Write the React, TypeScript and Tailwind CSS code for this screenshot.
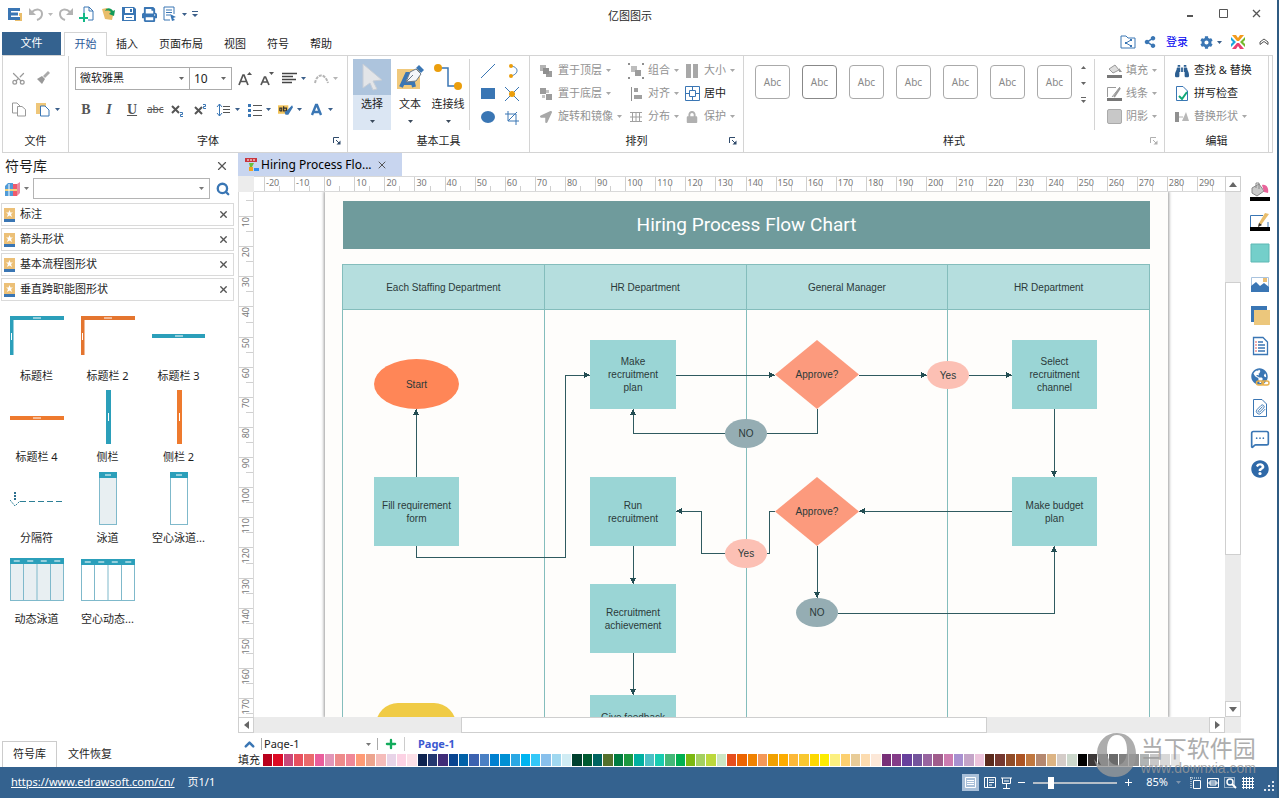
import type { ReactNode } from "react"
import { FaBinoculars, FaCog, FaGlobeAmericas, FaLocationArrow, FaLock, FaPrint, FaQuestionCircle, FaShareAlt } from "react-icons/fa"
import { ChevronUp, MessageSquareMore, Paperclip, Plus, Scissors, Search, X } from "lucide-react"

/* ---------- data ---------- */

const swatches = [
  "#b8001c", "#dd0a24", "#c8487a", "#e8505e", "#ea6a6c", "#ea5e9c", "#e296b8", "#ee8b8b", "#f08898", "#ff9b76", "#eca48e", "#f5bcba", "#e8d4e8", "#fcd2e4", "#fce0e8",
  "#0d2350", "#243870", "#402c78", "#084490", "#0061a8", "#3c62b0", "#4a80c4", "#0080d0", "#0090d4", "#2aa8e4", "#00b4f0", "#34c8f8", "#88c0ec", "#a0d8f0", "#d0ecf4",
  "#00402e", "#005a30", "#006460", "#54702c", "#007c40", "#1c9840", "#00b0a0", "#4cc0c4", "#18ccb0", "#44b878", "#00b050", "#7cb810", "#a4d060", "#bcd83c", "#cce6c4",
  "#e64e1e", "#ec6400", "#f08200", "#f49858", "#f0a000", "#fcac00", "#fcb838", "#f8c830", "#fcd800", "#fcec00", "#fcf080", "#fcd070", "#e8cc98", "#fcdcb0", "#fce8d8",
  "#783078", "#843c88", "#68409c", "#74549c", "#9864a0", "#a05c8c", "#cc7cb0", "#a890d0", "#c4a4c8", "#ecc4dc",
  "#5a2a1c", "#743830", "#904c28", "#ac5424", "#c07840", "#b48870", "#dcb484", "#d4ccc8", "#ccd8cc",
  "#000000", "#3c3838", "#585858", "#6a6a6a", "#808080", "#909090", "#b0b4b4", "#c8c8c8", "#d8d8d8", "#e4e4e4",
]

const menus = ["插入", "页面布局", "视图", "符号", "帮助"]
const libraries = ["标注", "箭头形状", "基本流程图形状", "垂直跨职能图形状"]
const lanes = ["Each Staffing Department", "HR Department", "General Manager", "HR Department"]

interface FlowNode {
  kind: "rect" | "oval" | "diamond"
  x: number
  y: number
  w: number
  h: number
  color: string
  lines: string[]
}

const nodes: FlowNode[] = [
  { kind: "oval", x: 49, y: 167, w: 85, h: 50, color: "#ff8657", lines: ["Start"] },
  { kind: "rect", x: 49, y: 285, w: 85, h: 69, color: "#9ad5d5", lines: ["Fill requirement", "form"] },
  { kind: "rect", x: 265, y: 148, w: 86, h: 69, color: "#9ad5d5", lines: ["Make", "recruitment", "plan"] },
  { kind: "rect", x: 265, y: 285, w: 86, h: 69, color: "#9ad5d5", lines: ["Run", "recruitment"] },
  { kind: "rect", x: 265, y: 392, w: 86, h: 69, color: "#9ad5d5", lines: ["Recruitment", "achievement"] },
  { kind: "rect", x: 265, y: 503, w: 86, h: 44, color: "#9ad5d5", lines: ["Give feedback"] },
  { kind: "diamond", x: 450, y: 148, w: 84, h: 69, color: "#fc9a7d", lines: ["Approve?"] },
  { kind: "diamond", x: 450, y: 285, w: 84, h: 69, color: "#fc9a7d", lines: ["Approve?"] },
  { kind: "oval", x: 400, y: 227, w: 42, h: 29, color: "#95adb3", lines: ["NO"] },
  { kind: "oval", x: 471, y: 406, w: 42, h: 29, color: "#95adb3", lines: ["NO"] },
  { kind: "oval", x: 602, y: 169, w: 42, h: 28, color: "#fcc0b4", lines: ["Yes"] },
  { kind: "oval", x: 400, y: 347, w: 42, h: 29, color: "#fcc0b4", lines: ["Yes"] },
  { kind: "rect", x: 687, y: 148, w: 85, h: 69, color: "#9ad5d5", lines: ["Select", "recruitment", "channel"] },
  { kind: "rect", x: 687, y: 285, w: 85, h: 69, color: "#9ad5d5", lines: ["Make budget", "plan"] },
  { kind: "oval", x: 51, y: 511, w: 80, h: 44, color: "#f0cb45", lines: [] },
]

const arrows = [
  "M91 285V217", "M91 354V365H240V183H265", "M351 183H450", "M534 183H602", "M644 183H687",
  "M400 241H308V217", "M729 217V285", "M687 319H534", "M400 361H376V319H351",
  "M492 354V406", "M513 421H729V354", "M308 354V392", "M308 461V503",
]
const plainLines = ["M492 217V241H442", "M450 319H444V361H442"]

/* ---------- small pieces ---------- */

function Svg({ w = 16, h = 16, box, children }: { w?: number; h?: number; box?: string; children: ReactNode }) {
  return (
    <svg width={w} height={h} viewBox={box ?? `0 0 ${w} ${h}`} fill="none" aria-hidden="true" className="shrink-0">
      {children}
    </svg>
  )
}

function Caret({ color = "#3b4a5c" }: { color?: string }) {
  return (
    <Svg w={5} h={3}>
      <path d="M0 0H5L2.500 3Z" fill={color} />
    </Svg>
  )
}

function Launcher({ color = "#2f4a6b" }: { color?: string }) {
  return (
    <Svg w={8} h={8}>
      <path d="M.5 6V.5H6M3 3L6 6" stroke={color} />
      <path d="M7.500 3.500V7.500H3.500Z" fill={color} />
    </Svg>
  )
}

function Group({ label, className, launcher, children }: { label: string; className: string; launcher?: ReactNode; children: ReactNode }) {
  return (
    <section className={`flex flex-col border-r border-[#d4d4d4] ${className}`}>
      <div className="flex flex-1 min-h-0">{children}</div>
      <div className="grid h-[22px] grid-cols-[1fr_auto_1fr] items-center">
        <span />
        <h2>{label}</h2>
        {launcher && <button aria-label={`${label}设置`} className="justify-self-end pr-1.5">{launcher}</button>}
      </div>
    </section>
  )
}

function IconButton({ label, caret, children }: { label: string; caret?: string; children: ReactNode }) {
  return (
    <button aria-label={label} title={label} className="flex items-center gap-1">
      {children}
      {caret && <Caret color={caret} />}
    </button>
  )
}

function Tool({ label, icon, dim, caret }: { label: string; icon: ReactNode; dim?: boolean; caret?: boolean }) {
  return (
    <button className={`flex h-[23px] items-center gap-1 whitespace-nowrap ${dim ? "text-[#929292]" : "text-[#222]"}`}>
      <span className="flex w-4 justify-center">{icon}</span>
      {label}
      {caret && <Caret color="#a8a8a8" />}
    </button>
  )
}

/* ---------- title bar and menu ---------- */

function TitleBar() {
  return (
    <header className="grid h-8 grid-cols-[1fr_auto_1fr] items-center pr-4 pl-[7px]">
      <div className="flex items-center gap-[5px] pb-1">
        <Svg>
          <path d="M1 2H13V5H4V6.500H11V9.500H4V11H13V14H1Z" fill="#3a76b4" />
          <path d="M12 7H15V15H8V14H13V10H12Z" fill="#e9bd6b" />
        </Svg>
        <IconButton label="撤销" caret="#b9b9b9">
          <Svg>
            <path d="M4 6C8 2 14 3 14 8C14 11 12 13 9 14" stroke="#b3b3b3" strokeWidth="2" />
            <path d="M1 2V9H8Z" fill="#b3b3b3" />
          </Svg>
        </IconButton>
        <IconButton label="重做">
          <Svg>
            <path d="M12 6C8 2 2 3 2 8C2 11 4 13 7 14" stroke="#b3b3b3" strokeWidth="2" />
            <path d="M15 2V9H8Z" fill="#b3b3b3" />
          </Svg>
        </IconButton>
        <IconButton label="新建">
          <Svg>
            <path d="M5 8V1H10L14 5V14H9M10 1V5H14" stroke="#3a76b4" />
            <path d="M5 7V16M0 12H9" stroke="#12b886" strokeWidth="2" />
          </Svg>
        </IconButton>
        <IconButton label="打开">
          <Svg>
            <path d="M2 3L7 2L9 4L14 5L12 14L5 13Z" fill="#e9bd6b" />
            <path d="M5 5C7 1 11 2 13 5L15 4L14 10L9 8L11 6C10 5 8 4 5 5Z" fill="#139a58" />
          </Svg>
        </IconButton>
        <IconButton label="保存">
          <Svg>
            <path d="M1 1H13L15 3V15H1Z" fill="#3a76b4" />
            <path d="M4 2H12V7H4ZM3 9H13V14H3Z" fill="#fff" />
            <path d="M9 3H11V6H9ZM5 11H11V12H5Z" fill="#3a76b4" />
          </Svg>
        </IconButton>
        <IconButton label="打印">
          <FaPrint size={15} color="#3a76b4" />
        </IconButton>
        <IconButton label="打印预览" caret="#3b5f8a">
          <Svg>
            <path d="M8 14H2V1H12V8M4 4H10M4 6.500H10M4 9H8" stroke="#3a76b4" />
            <path d="M8 8L14 11L11 12L13 14L10 15Z" fill="#3a76b4" />
          </Svg>
        </IconButton>
        <IconButton label="自定义">
          <Svg w={6} h={7}>
            <path d="M0 .5H6" stroke="#3b5f8a" />
            <path d="M0 3H6L3 6Z" fill="#3b5f8a" />
          </Svg>
        </IconButton>
      </div>
      <h1 className="pr-2">亿图图示</h1>
      <div className="flex items-center gap-6 justify-self-end pb-1.5">
        <IconButton label="最小化">
          <Svg w={9} h={9}><path d="M1 7H7" stroke="#555" strokeWidth="2" /></Svg>
        </IconButton>
        <IconButton label="最大化">
          <Svg w={9} h={9}><path d="M.5 .5H8.500V8.500H.5Z" stroke="#555" /></Svg>
        </IconButton>
        <IconButton label="关闭">
          <Svg w={9} h={9}><path d="M1 1L8 8M8 1L1 8" stroke="#555" strokeWidth="1.300" /></Svg>
        </IconButton>
      </div>
    </header>
  )
}

function MenuBar() {
  return (
    <nav className="relative z-10 -mb-px flex h-6 items-stretch px-[2px]">
      <button className="mb-px w-[59px] bg-[#34628f] text-white">文件</button>
      <button className="ml-[3px] w-[43px] border border-b-0 border-[#d4d4d4] bg-white text-[#2c5a9a]">开始</button>
      <div className="flex gap-[21px] pl-[9px]">
        {menus.map((m) => (
          <button key={m}>{m}</button>
        ))}
      </div>
      <div className="ml-auto flex items-center gap-2 pr-1.5 pb-1">
        <IconButton label="共享文件夹">
          <Svg>
            <path d="M1 14V2H6L8 4H15V14Z" stroke="#3a76b4" />
            <path d="M11 6L6 9L11 12" stroke="#3a76b4" />
            <path d="M10 5H12V7H10ZM5 8H7V10H5ZM10 11H12V13H10Z" fill="#3a76b4" />
          </Svg>
        </IconButton>
        <IconButton label="分享"><FaShareAlt size={12} color="#3a76b4" /></IconButton>
        <a href="#login" className="pr-1 pl-[2px] text-[#0000f0]">登录</a>
        <IconButton label="选项" caret="#3b5f8a"><FaCog size={13} color="#3a76b4" /></IconButton>
        <IconButton label="应用">
          <Svg>
            <path d="M2 1H6L8 4L10 1H14L9 7H7Z" fill="#f39b1c" />
            <path d="M1 3L6 8L1 13V10L3 8L1 6Z" fill="#1ba7dc" />
            <path d="M15 3L10 8L15 13V10L13 8L15 6Z" fill="#74b92c" />
            <path d="M7 9H9L14 15H10L8 12L6 15H2Z" fill="#ea4070" />
          </Svg>
        </IconButton>
        <span className="-ml-1 w-px" />
        <IconButton label="折叠功能区">
          <Svg w={10} h={8}><path d="M1 4L5 1L9 4V6.500L5 3.500L1 6.500Z" stroke="#555" /></Svg>
        </IconButton>
      </div>
    </nav>
  )
}

/* ---------- ribbon ---------- */

function LayerIcon({ back }: { back?: boolean }) {
  return (
    <Svg w={14} h={14}>
      <path d="M1 1H7V7H1Z" fill={back ? "#9c9c9c" : "#b4b4b4"} />
      <path d="M7 7H13V13H7Z" fill="#9c9c9c" />
      <path d={back ? "M7 3H10V6H7ZM3 8H6V11H3Z" : "M4 4H10V10H4Z"} fill={back ? "#c4c4c4" : "#8f8f8f"} />
    </Svg>
  )
}

function FontGroup() {
  return (
    <Group label="字体" className="w-[279px]" launcher={<Launcher />}>
      <div className="flex flex-col pt-[11px] pl-1.5">
        <div className="flex h-[23px] items-center">
          <div className="relative flex items-center">
            <select aria-label="字体" className="h-[23px] w-[115px] appearance-none border border-[#ababab] bg-white pl-1">
              <option>微软雅黑</option>
            </select>
            <span className="pointer-events-none absolute right-1.5"><Caret color="#666" /></span>
          </div>
          <div className="relative -ml-px flex items-center">
            <select aria-label="字号" className="h-[23px] w-[43px] appearance-none border border-[#ababab] bg-white pl-1 text-xs">
              <option>10</option>
            </select>
            <span className="pointer-events-none absolute right-1.5"><Caret color="#666" /></span>
          </div>
          <div className="flex items-center gap-2 pl-1.5">
            <IconButton label="增大字号">
              <Svg w={14}><path d="M1 14L5 4H6L10 14M2.500 10.500H8.500" stroke="#555" strokeWidth="1.700" /><path d="M9 4L11.500 1L14 4Z" fill="#555" /></Svg>
            </IconButton>
            <IconButton label="减小字号">
              <Svg w={14}><path d="M1 14L4.500 6H5.500L9 14M2.500 11H7.500" stroke="#555" strokeWidth="1.700" /><path d="M9 1H14L11.500 4Z" fill="#555" /></Svg>
            </IconButton>
            <IconButton label="对齐" caret="#3b5f8a">
              <Svg w={15} h={13}><path d="M0 1.500H15M0 4.500H11M0 7.500H14M0 10.500H10" stroke="#444" strokeWidth="1.500" /></Svg>
            </IconButton>
            <IconButton label="文字弧度" caret="#b5b5b5">
              <Svg w={15} h={13}><path d="M1 11C3 1 11 1 14 11" stroke="#b5b5b5" strokeWidth="2" strokeDasharray="3 1" /></Svg>
            </IconButton>
          </div>
        </div>
        <div className="mt-[8px] flex h-[23px] items-center gap-[7px] pl-[3px] text-[#555]">
          <button className="w-4 font-['Liberation_Serif',serif] text-sm font-bold">B</button>
          <button className="w-4 font-['Liberation_Serif',serif] text-sm font-bold italic">I</button>
          <button className="w-4 font-['Liberation_Serif',serif] text-sm font-bold underline">U</button>
          <button className="w-4 text-[10px] line-through">abc</button>
          <IconButton label="下标">
            <Svg><path d="M2 4L9 11M9 4L2 11" stroke="#555" strokeWidth="2" /><path d="M10 10.500H12.500V12.500H10.500V14.500H13" stroke="#3a76b4" /></Svg>
          </IconButton>
          <IconButton label="上标">
            <Svg><path d="M2 5L9 12M9 5L2 12" stroke="#555" strokeWidth="2" /><path d="M10 2.500H12.500V4.500H10.500V6.500H13" stroke="#3a76b4" /></Svg>
          </IconButton>
          <IconButton label="行距" caret="#3b5f8a">
            <Svg w={15}><path d="M3.500 2V14M1 5L3.500 2L6 5M1 11L3.500 14L6 11" stroke="#3a76b4" /><path d="M7 4.500H14M7 7.500H14M7 10.500H14" stroke="#555" /></Svg>
          </IconButton>
          <IconButton label="项目符号" caret="#3b5f8a">
            <Svg w={15}><path d="M1 2H4V5H1ZM1 7H4V10H1ZM1 12H4V15H1Z" fill="#3a76b4" /><path d="M6 3.500H15M6 8.500H15M6 13.500H15" stroke="#555" /></Svg>
          </IconButton>
          <IconButton label="突出显示" caret="#3b5f8a">
            <Svg w={15} box="0 0 16 16">
              <path d="M0 3H11V12H0Z" fill="#f3c45a" />
              <path d="M2 9V6H4V9H2M6 4V9H9V6H6" stroke="#333" strokeWidth="1.300" />
              <path d="M15 3L16 5L11 13H8L7 10L9 9Z" fill="#3a76b4" />
            </Svg>
          </IconButton>
          <IconButton label="字体颜色" caret="#3b5f8a">
            <Svg w={15}><path d="M3 13L7 3H8L12 13M5 10H10" stroke="#3a76b4" strokeWidth="2.400" /></Svg>
          </IconButton>
        </div>
      </div>
    </Group>
  )
}

function BigTool({ label, icon, active }: { label: string; icon: ReactNode; active?: boolean }) {
  return (
    <button aria-pressed={active} className={`flex h-[71px] w-[38px] flex-col items-center whitespace-nowrap ${active ? "bg-[#dbe6f3]" : ""}`}>
      <span className={`flex h-9 w-full items-center justify-center ${active ? "bg-[#adc4dd]" : ""}`}>{icon}</span>
      <span className="h-[25px] leading-[18px]">{label}</span>
      <Caret />
    </button>
  )
}

function BasicTools() {
  return (
    <Group label="基本工具" className="w-[182px]">
      <div className="flex pt-[3px] pl-[5px]">
        <BigTool
          active
          label="选择"
          icon={<Svg w={24} h={28}><path d="M3 1L22 17L13 18L17 26L13 27L10 20L3 25Z" fill="#e3e5e8" stroke="#c6cdd6" /></Svg>}
        />
        <BigTool
          label="文本"
          icon={
            <Svg w={28} h={26}>
              <path d="M1 5H24V25H1Z" fill="#f0c97c" />
              <path d="M5 23L11 10H15L18 23M8 19H16" stroke="#3a76b4" strokeWidth="4" />
              <path d="M10 18L14 8L20 5L25 10L20 17Z" fill="#f4f6f8" stroke="#6c7a89" />
              <path d="M10 18L17 11" stroke="#6c7a89" />
              <path d="M20 4L23 1L28 6L25 9Z" fill="#3a76b4" />
            </Svg>
          }
        />
        <BigTool
          label="连接线"
          icon={
            <Svg w={28} h={28}>
              <path d="M4 5H14V23H24" stroke="#3a76b4" strokeWidth="1.500" />
              <circle cx="4" cy="5" r="4" fill="#eb9e0c" />
              <circle cx="24" cy="23" r="4" fill="#eb9e0c" />
            </Svg>
          }
        />
      </div>
      <div className="mt-[3px] ml-[2px] grid h-[71px] grid-cols-2 place-items-center gap-x-2 border-l border-[#d4d4d4] pl-[10px]">
        <IconButton label="直线"><Svg><path d="M1 15L15 1" stroke="#3a76b4" /></Svg></IconButton>
        <IconButton label="弧线">
          <Svg><path d="M7 3C15 4 15 11 7 13" stroke="#3a76b4" /><circle cx="7" cy="3" r="2" fill="#eb9e0c" /><circle cx="7" cy="13" r="2" fill="#eb9e0c" /></Svg>
        </IconButton>
        <IconButton label="矩形"><Svg><path d="M1 2H15V13H1Z" fill="#3a76b4" /></Svg></IconButton>
        <IconButton label="连接点"><Svg><path d="M1 1L15 15M15 1L1 15" stroke="#3a76b4" /><circle cx="8" cy="8" r="3" fill="#eb9e0c" /></Svg></IconButton>
        <IconButton label="椭圆"><Svg><ellipse cx="8" cy="7" rx="7" ry="6" fill="#3a76b4" /></Svg></IconButton>
        <IconButton label="裁剪"><Svg><path d="M4 1V11H15M1 4H12V15M4 11L13 2" stroke="#3a76b4" /></Svg></IconButton>
      </div>
    </Group>
  )
}

function ArrangeGroup() {
  return (
    <Group label="排列" className="w-[214px]" launcher={<Launcher />}>
      <div className="flex pt-[3px] pl-2">
        <div className="w-[90px]">
          <Tool dim caret label="置于顶层" icon={<LayerIcon />} />
          <Tool dim caret label="置于底层" icon={<LayerIcon back />} />
          <Tool dim caret label="旋转和镜像" icon={<FaLocationArrow size={12} color="#a8a8a8" />} />
        </div>
        <div className="w-[56px]">
          <Tool dim caret label="组合" icon={
            <Svg><path d="M3 3H9V9H3Z" fill="#bdbdbd" /><path d="M7 7H13V13H7Z" fill="#9c9c9c" /><path d="M0 0H2V2H0ZM14 0H16V2H14ZM0 14H2V16H0ZM14 14H16V16H14Z" fill="#8f8f8f" /></Svg>
          } />
          <Tool dim caret label="对齐" icon={<Svg w={14}><path d="M2.500 1V15" stroke="#8f8f8f" /><path d="M5 2H9V6H5ZM5 9H13V13H5Z" fill="#a0a0a0" /></Svg>} />
          <Tool dim caret label="分布" icon={<Svg w={14} h={12}><path d="M1 1.500H13M1 10.500H13M3.500 1V11M10.500 1V11M7 1V11M1 6H13" stroke="#a0a0a0" /></Svg>} />
        </div>
        <div>
          <Tool dim caret label="大小" icon={<Svg w={12} h={14}><path d="M0 0H5V14H0ZM7 0H12V14H7Z" fill="#a8a8a8" /></Svg>} />
          <Tool label="居中" icon={<Svg w={15} h={15}><path d="M.5 .5H14.500V14.500H.5ZM4.500 4.500H10.500V10.500H4.500ZM7.500 1V4M7.500 11V14M1 7.500H4M11 7.500H14" stroke="#3a76b4" /></Svg>} />
          <Tool dim caret label="保护" icon={<FaLock size={12} color="#b0b0b0" />} />
        </div>
      </div>
    </Group>
  )
}

function StyleGroup() {
  return (
    <Group label="样式" className="min-w-[414px] flex-1" launcher={<Launcher color="#b0b0b0" />}>
      <div className="flex flex-1 items-start gap-3 overflow-hidden pt-[9px] pl-[11px]">
        {[0, 1, 2, 3, 4, 5, 6].map((i) => (
          <button key={i} className={`h-[34px] w-[35px] shrink-0 rounded border bg-white text-[10px] text-[#888] ${i === 1 ? "border-[#888]" : "border-[#aaa]"}`}>
            Abc
          </button>
        ))}
      </div>
      <div className="flex h-[50px] flex-col justify-between px-2 pt-[10px] pb-[3px]">
        <IconButton label="上一行"><Svg w={5} h={3}><path d="M0 3H5L2.500 0Z" fill="#666" /></Svg></IconButton>
        <IconButton label="下一行"><Caret color="#666" /></IconButton>
        <IconButton label="更多样式"><Svg w={5} h={6}><path d="M0 .5H5" stroke="#666" /><path d="M0 3H5L2.500 6Z" fill="#666" /></Svg></IconButton>
      </div>
      <div className="mt-[3px] h-[71px] border-l border-[#d4d4d4] pr-[7px] pl-[11px]">
        <Tool dim caret label="填充" icon={
          <Svg w={15} h={15}><path d="M2 6L8 2L12 7L6 10Z" fill="#ddd" stroke="#999" /><path d="M12 5L15 9H12Z" fill="#999" /><path d="M0 12H15V15H0Z" fill="#777" /></Svg>
        } />
        <Tool dim caret label="线条" icon={
          <Svg w={15} h={15}><path d="M9 1.500H.5V11M5 11L13 1" stroke="#999" /><path d="M7 11L13 2" stroke="#999" strokeWidth="2" /><path d="M0 12H15V15H0Z" fill="#777" /></Svg>
        } />
        <Tool dim caret label="阴影" icon={<span className="h-[15px] w-[15px] rounded-xs border border-[#aaa] bg-[#c8c8c8]" />} />
      </div>
    </Group>
  )
}

function Ribbon() {
  return (
    <div className="mr-1 ml-[2px] flex h-[98px] border border-[#d4d4d4] pr-[3px]">
      <Group label="文件" className="w-[66px]">
        <div className="grid grid-cols-[auto_auto] content-start gap-x-2 gap-y-[15px] pt-[14px] pl-2">
          <IconButton label="剪切"><Scissors size={15} color="#999" strokeWidth={2} className="rotate-270" /></IconButton>
          <IconButton label="格式刷"><Svg><path d="M13 1L15 3L10 8L8 6Z" fill="#aaa" /><path d="M7 6L10 9L7 14L2 9Z" fill="#999" /></Svg></IconButton>
          <IconButton label="复制"><Svg><path d="M6 12H1.500V2H6L9 5M6.500 5.500H11L14.500 8.500V15H6.500Z" stroke="#999" /></Svg></IconButton>
          <IconButton label="粘贴" caret="#3b5f8a">
            <Svg><path d="M1 2H11V13H1Z" fill="#efc77a" /><path d="M5.500 5H10L14 9V15H5.500Z" fill="#fff" stroke="#3a76b4" /></Svg>
          </IconButton>
        </div>
      </Group>
      <FontGroup />
      <BasicTools />
      <ArrangeGroup />
      <StyleGroup />
      <Group label="编辑" className="w-[104px]">
        <div className="pt-[3px] pl-[9px]">
          <Tool label="查找 & 替换" icon={<FaBinoculars size={14} color="#2c5f92" />} />
          <Tool label="拼写检查" icon={<Svg w={12} h={15}><path d="M.5 .5H7L11.500 5V14.500H.5Z" stroke="#3a76b4" /><path d="M3 10L6 13L11 6" stroke="#12a878" strokeWidth="2" /></Svg>} />
          <Tool dim caret label="替换形状" icon={<Svg w={14} h={12}><path d="M0 1H4V11H0Z" fill="#909090" /><path d="M4 6H8" stroke="#b0b0b0" /><path d="M11 1L14 10H7Z" fill="#b8b8b8" /></Svg>} />
        </div>
      </Group>
    </div>
  )
}

/* ---------- symbol library ---------- */

function LaneShape({ x, y, w, h, cols, fill }: { x: number; y: number; w: number; h: number; cols: number; fill: string }) {
  const step = w / cols
  return (
    <Svg w={54} h={54}>
      <rect x={x + 0.5} y={y + 0.5} width={w - 1} height={h - 1} fill={fill} stroke="#7fb9cb" />
      <rect x={x} y={y} width={w} height={6} fill="#2b9fba" />
      {Array.from({ length: cols }, (_, i) => (
        <g key={i}>
          {i > 0 && <path d={`M${x + step * i} ${y + 6}V${y + h}`} stroke="#7fb9cb" />}
          <path d={`M${x + step * (i + 0.5) - 3} ${y + 3}h6`} stroke="#fff" />
        </g>
      ))}
    </Svg>
  )
}

const shapes: { name: string; art: ReactNode }[] = [
  { name: "标题栏", art: <Svg w={54} h={54}><path d="M1.500 46V9H54" stroke="#2b9fba" strokeWidth="4" /><path d="M23 9H31M1.500 24V31" stroke="#fff" /></Svg> },
  { name: "标题栏 2", art: <Svg w={54} h={54}><path d="M1.500 46V9H54" stroke="#e4752f" strokeWidth="4" /><path d="M23 9H31M1.500 24V31" stroke="#fff" /></Svg> },
  { name: "标题栏 3", art: <Svg w={54} h={54}><path d="M0 27H53" stroke="#2b9fba" strokeWidth="4" /><path d="M23 27H31" stroke="#fff" /></Svg> },
  { name: "标题栏 4", art: <Svg w={54} h={54}><path d="M0 28H54" stroke="#ee7a2e" strokeWidth="4" /><path d="M23 28H31" stroke="#fff" /></Svg> },
  { name: "侧栏", art: <Svg w={54} h={54}><path d="M27.500 0V54" stroke="#2b9fba" strokeWidth="5" /><path d="M27.500 23V31" stroke="#fff" /></Svg> },
  { name: "侧栏 2", art: <Svg w={54} h={54}><path d="M27.500 0V54" stroke="#ee7a2e" strokeWidth="5" /><path d="M27.500 23V31" stroke="#fff" /></Svg> },
  { name: "分隔符", art: <Svg w={54} h={54}><path d="M0 29L5 35L10 30" stroke="#2d7f96" strokeDasharray="2 1" /><path d="M5 21V29" stroke="#2d6f8f" strokeWidth="2" strokeDasharray="2 1" /><path d="M10 30.500H54" stroke="#2d7f96" strokeDasharray="6 3" /></Svg> },
  { name: "泳道", art: <LaneShape x={18} y={1} w={18} h={53} cols={1} fill="#e8eff2" /> },
  { name: "空心泳道...", art: <LaneShape x={18} y={1} w={18} h={53} cols={1} fill="#fff" /> },
  { name: "动态泳道", art: <LaneShape x={0} y={6} w={54} h={43} cols={4} fill="#e8eff2" /> },
  { name: "空心动态...", art: <LaneShape x={0} y={7} w={54} h={42} cols={4} fill="#fff" /> },
]

function SymbolPanel() {
  return (
    <aside className="flex w-[238px] shrink-0 flex-col">
      <div className="flex h-[25px] items-center justify-between pr-[9px] pl-[5px]">
        <h2 className="text-sm">符号库</h2>
        <button aria-label="关闭符号库"><X size={14} color="#555" strokeWidth={2} /></button>
      </div>
      <div className="flex h-[21px] items-center gap-1 pl-[5px]">
        <IconButton label="库" caret="#777">
          <Svg w={15}>
            <path d="M0 5L3 2H8V15H0Z" fill="#4f9bd8" /><path d="M8 3H12V15H8Z" fill="#ef5a6c" /><path d="M12 3L15 1V12L12 15Z" fill="#e98aa0" />
            <path d="M0 8H12V10H0Z" fill="#f4d27a" /><path d="M4 3V15" stroke="#fff" />
          </Svg>
        </IconButton>
        <div className="relative flex flex-1 items-center">
          <input aria-label="搜索符号" className="h-[21px] w-full border border-[#b4b4b4] bg-white px-1 outline-none" />
          <span className="absolute right-1.5"><Caret color="#777" /></span>
        </div>
        <button aria-label="搜索" className="pr-2 pl-[2px]"><Search size={14} color="#3a76b4" strokeWidth={4} /></button>
      </div>
      <ul className="flex flex-col gap-[2px] pt-1 pr-1 pl-px">
        {libraries.map((name) => (
          <li key={name} className="flex h-[23px] items-center border border-[#dadada] pr-1 pl-[2px]">
            <Svg w={11} h={14}>
              <path d="M0 0H11V11H0Z" fill="#ecc077" />
              <path d="M5.500 2L6.500 4.500H9L7 6L8 9L5.500 7.500L3 9L4 6L2 4.500H4.500Z" fill="#fff" />
              <path d="M0 11H11V14H0Z" fill="#3a76b4" />
            </Svg>
            <span className="flex-1 pl-[5px]">{name}</span>
            <button aria-label={`关闭${name}`}><X size={11} color="#555" strokeWidth={3} /></button>
          </li>
        ))}
      </ul>
      <div className="mt-1 ml-px grid w-[213px] grid-cols-3">
        {shapes.map((s) => (
          <button key={s.name} className="flex h-[81px] flex-col items-center pt-1">
            {s.art}
            <span className="pt-1 leading-[18px]">{s.name}</span>
          </button>
        ))}
      </div>
      <div className="mt-auto flex h-[26px] items-stretch pl-[2px]">
        <button className="w-[55px] border border-b-0 border-[#ccc]">符号库</button>
        <button className="px-[11px]">文件恢复</button>
      </div>
    </aside>
  )
}

/* ---------- canvas ---------- */

function TopRuler() {
  return (
    <div className="flex h-4 overflow-hidden border-y border-[#d9d9d9] pl-[10px] text-[9px] leading-[11px] text-[#777]">
      <div className="flex w-[963px] shrink-0">
        {Array.from({ length: 32 }, (_, i) => (
          <div key={i} className="flex flex-1 justify-between border-l border-[#d0d0d0]">
            <span className="w-[14px] pl-px">{(i - 2) * 10}</span>
            <span className="h-[5px] w-[15px] self-end border-l border-[#d0d0d0]" />
          </div>
        ))}
      </div>
    </div>
  )
}

function LeftRuler() {
  return (
    <div className="flex w-4 shrink-0 flex-col items-end overflow-hidden border-x border-[#d9d9d9] text-[9px] leading-[13px] text-[#777]">
      <div className="h-[9px] w-[7px] shrink-0 border-b border-[#d0d0d0]" />
      <div className="flex h-[527px] w-full shrink-0 flex-col pt-[15px]">
        {Array.from({ length: 17 }, (_, i) => (
          <div key={i} className="flex h-[30px] flex-1 flex-col items-end justify-between border-t border-[#d0d0d0]">
            <span className="h-[14px] w-full">
              <span className="block rotate-180 [writing-mode:vertical-rl]">{(i + 1) * 10}</span>
            </span>
            <span className="h-[15px] w-[7px] border-t border-[#d0d0d0]" />
          </div>
        ))}
      </div>
    </div>
  )
}

function NodeBox({ node }: { node: FlowNode }) {
  const { kind, x, y, w, h, color, lines } = node
  return (
    <div className="absolute flex items-center justify-center" style={{ left: x, top: y, width: w, height: h }}>
      <svg width={w} height={h} className="absolute inset-0" aria-hidden="true">
        {kind === "rect" && <rect width={w} height={h} fill={color} />}
        {kind === "oval" && lines.length > 0 && <ellipse cx={w / 2} cy={h / 2} rx={w / 2} ry={h / 2} fill={color} />}
        {kind === "oval" && lines.length === 0 && <rect width={w} height={h} rx={h / 2} fill={color} />}
        {kind === "diamond" && <polygon points={`${w / 2},0 ${w},${h / 2} ${w / 2},${h} 0,${h / 2}`} fill={color} />}
      </svg>
      <p className="relative text-center leading-[13px] whitespace-nowrap">
        {lines.map((l) => (
          <span key={l} className="block">{l}</span>
        ))}
      </p>
    </div>
  )
}

function Drawing() {
  return (
    <div className="relative min-w-0 flex-1 overflow-hidden bg-white font-['Liberation_Sans',sans-serif] text-[10px] text-[#2b3a3a]">
      <div className="absolute inset-y-0 left-[71px] w-[843px] bg-[#fefdfb] shadow-[0_0_3px_1px_#999]">
        <div className="absolute top-[9px] left-[18px] flex h-12 w-[807px] items-center justify-center bg-[#6f9b9c] font-[Roboto,sans-serif] text-[19px] text-white">
          Hiring Process Flow Chart
        </div>
        <div className="absolute top-[72px] bottom-0 left-[17px] grid w-[808px] grid-cols-4 border-t border-l border-[#84bdbc]">
          {lanes.map((lane, i) => (
            <div key={i} className="border-r border-[#84bdbc]">
              <div className="flex h-[45px] items-center justify-center border-b border-[#84bdbc] bg-[#b5dede]">{lane}</div>
            </div>
          ))}
        </div>
        <svg width="843" height="524" className="absolute inset-0" fill="none" stroke="#2f5a5f" shapeRendering="crispEdges" aria-hidden="true">
          <defs>
            <marker id="tip" viewBox="0 0 6 6" refX="6" refY="3" markerWidth="6" markerHeight="6" orient="auto">
              <path d="M0 0L6 3L0 6Z" fill="#234d52" stroke="none" />
            </marker>
          </defs>
          {arrows.map((d) => <path key={d} d={d} markerEnd="url(#tip)" />)}
          {plainLines.map((d) => <path key={d} d={d} />)}
        </svg>
        {nodes.map((n, i) => <NodeBox key={i} node={n} />)}
      </div>
    </div>
  )
}

const scrollButton = "flex size-4 shrink-0 items-center justify-center border border-[#cfcfcf] bg-white"

function Workspace() {
  return (
    <main className="flex min-w-0 flex-1 flex-col">
      <div className="flex h-[23px]">
        <div className="flex w-[164px] items-center bg-[#c8d5ef] pl-1.5">
          <Svg>
            <path d="M1 1H13V5H1Z" fill="#c9363e" /><path d="M3 3H11" stroke="#fff" strokeDasharray="2 1" />
            <path d="M5 6H10L8 10H6Z" fill="#6cbf3c" /><path d="M5 10H9V14H5Z" fill="#f2a51e" /><path d="M10 11H15V14H10Z" fill="#2f8ef0" />
          </Svg>
          <span className="pl-px text-xs whitespace-nowrap text-black">Hiring Process Flo...</span>
          <button aria-label="关闭文档" className="pl-1"><X size={12} color="#555" /></button>
        </div>
      </div>
      <div className="flex min-h-0 flex-1">
        <div className="flex min-w-0 flex-1 flex-col">
          <div className="flex">
            <div className="w-4 shrink-0 bg-[#ececec]" />
            <div className="min-w-0 flex-1"><TopRuler /></div>
          </div>
          <div className="flex min-h-0 flex-1">
            <LeftRuler />
            <Drawing />
          </div>
        </div>
        <div className="flex w-4 shrink-0 flex-col bg-[#ebebeb]">
          <button aria-label="向上滚动" className={scrollButton}><Svg w={8} h={5}><path d="M0 5H8L4 0Z" fill="#666" /></Svg></button>
          <div className="flex-[90]" />
          <div className="flex-[272] border border-[#cfcfcf] bg-white" />
          <div className="flex-[146]" />
          <button aria-label="向下滚动" className={scrollButton}><Svg w={8} h={5}><path d="M0 0H8L4 5Z" fill="#666" /></Svg></button>
        </div>
      </div>
      <div className="flex h-4 bg-[#ebebeb]">
        <button aria-label="向左滚动" className={scrollButton}><Svg w={5} h={8}><path d="M5 0V8L0 4Z" fill="#666" /></Svg></button>
        <div className="flex-[207]" />
        <div className="flex-[526] border border-[#cfcfcf] bg-white" />
        <div className="flex-[222]" />
        <button aria-label="向右滚动" className={scrollButton}><Svg w={5} h={8}><path d="M0 0V8L5 4Z" fill="#666" /></Svg></button>
        <div className="w-4 shrink-0" />
      </div>
      <div className="flex h-5 items-center pt-[2px] pl-1 text-[#222]">
        <button aria-label="展开页面"><ChevronUp size={15} color="#3a76b4" strokeWidth={4} /></button>
        <div className="relative ml-1 flex items-center border-x border-[#aaa]">
          <select aria-label="页面" className="h-3 w-[115px] appearance-none bg-white pl-[2px] leading-3">
            <option>Page-1</option>
          </select>
          <span className="pointer-events-none absolute right-1.5"><Caret color="#777" /></span>
        </div>
        <button aria-label="添加页面" className="border-r border-[#ccc] px-1.5"><Plus size={14} color="#12ab5c" strokeWidth={4} /></button>
        <a href="#page-1" className="pl-[13px] font-bold text-[#3a58d0]">Page-1</a>
      </div>
      <div className="flex h-[14px] items-center">
        <span className="w-[25px] leading-[14px] whitespace-nowrap">填充</span>
        <div className="flex h-3 w-[917px] gap-px">
          {swatches.map((c, i) => (
            <button key={i} aria-label={c} className="flex-1" style={{ backgroundColor: c }} />
          ))}
        </div>
      </div>
    </main>
  )
}

function SideTools() {
  return (
    <aside className="flex w-9 shrink-0 flex-col items-center gap-[11px] pt-7 pl-[2px]">
      <IconButton label="填充">
        <Svg w={20} h={20}><path d="M2 7L9 3L14 10L7 15L2 12Z" fill="#c9c9c9" stroke="#888" /><path d="M6 7V2H9V8" stroke="#888" /><path d="M12 4C17 3 19 8 18 12L14 11Z" fill="#e8639a" /><path d="M0 16H20V20H0Z" fill="#000" /></Svg>
      </IconButton>
      <IconButton label="线条">
        <Svg w={20} h={20}><path d="M.5 15V3.500H13M18 10V15" stroke="#3a76b4" /><path d="M15 1L19 2L11 13L8 15L9 11Z" fill="#e9bd6b" /><path d="M8 15L9 11L12 13Z" fill="#333" /><path d="M0 15H20V19H0Z" fill="#000" /></Svg>
      </IconButton>
      <IconButton label="颜色"><Svg w={20} h={20}><path d="M1 1H19V19H1Z" fill="#74cfca" stroke="#5fb8b4" /></Svg></IconButton>
      <IconButton label="图片">
        <Svg w={20} h={20}><path d="M1.500 3.500H18.500V17.500H1.500Z" stroke="#a9c3de" /><path d="M1 12L6 8L10 12L14 9L19 13V18H1Z" fill="#3a76b4" /><path d="M13 4H17V8H13Z" fill="#ecc077" /></Svg>
      </IconButton>
      <IconButton label="图层"><Svg w={20} h={20}><path d="M1 1H17V17H1Z" fill="#3a76b4" /><path d="M4 5H20V20H4Z" fill="#ecc77c" /></Svg></IconButton>
      <IconButton label="页面">
        <Svg w={20} h={20}><path d="M3.500 1.500H13L17.500 6V18.500H3.500Z" stroke="#3a76b4" strokeWidth="1.300" /><path d="M8 6H13M8 9H15M8 12H15M8 15H15" stroke="#3a76b4" strokeWidth="1.500" /><path d="M5 6H7M5 9H7M5 12H7M5 15H7" stroke="#e05a5a" /></Svg>
      </IconButton>
      <IconButton label="超链接">
        <Svg w={20} h={20}>
          <FaGlobeAmericas size={17} color="#3a76b4" x={1} y={1} />
          <rect x="6.500" y="14" width="7" height="4" rx="2" stroke="#e9b04a" strokeWidth="1.500" />
          <rect x="12" y="14" width="7" height="4" rx="2" stroke="#e9b04a" strokeWidth="1.500" />
        </Svg>
      </IconButton>
      <IconButton label="附件">
        <Svg w={20} h={20}><path d="M3.500 1.500H12L16.500 6V18.500H3.500Z" stroke="#3a76b4" /><Paperclip x={5} y={6} size={11} color="#3a76b4" /></Svg>
      </IconButton>
      <IconButton label="批注"><MessageSquareMore size={20} color="#3a76b4" strokeWidth={2} /></IconButton>
      <IconButton label="帮助"><FaQuestionCircle size={18} color="#2f69a8" /></IconButton>
    </aside>
  )
}

/* ---------- status bar ---------- */

function StatusBar() {
  return (
    <footer className="flex h-[31px] shrink-0 items-center bg-[#34628f] text-white">
      <a href="https://www.edrawsoft.com/cn/" className="pl-[11px] underline">https://www.edrawsoft.com/cn/</a>
      <span className="pl-[13px]">页1/1</span>
      <div className="ml-auto flex items-center gap-[5px] pr-[3px]">
        <button aria-label="普通视图" className="flex size-[17px] items-center justify-center bg-[#a9c0d9]">
          <Svg w={11} h={11}><path d="M.5 .5H10.500V10.500H.5ZM2 3.500H9M2 5.500H9M2 7.500H9" stroke="#fff" /></Svg>
        </button>
        <IconButton label="大纲视图"><Svg w={12} h={11}><path d="M.5 .5H11.500V10.500H.5ZM3.500 0V11M5 3H10M5 5.500H10M5 8H8" stroke="#fff" /></Svg></IconButton>
        <IconButton label="放映"><Svg w={11} h={12}><path d="M0 1H11M1.500 1V6.500H9.500V1M5.500 7V11M2 11.500H9M3 4H8" stroke="#fff" /></Svg></IconButton>
        <IconButton label="缩小"><Svg w={9} h={9}><path d="M1 4.500H8" stroke="#fff" /></Svg></IconButton>
        <input
          type="range"
          aria-label="缩放"
          min={0}
          max={100}
          defaultValue={19}
          className="mx-[2px] h-3 w-[84px] appearance-none bg-[linear-gradient(#b5bfc9,#b5bfc9)] bg-[length:100%_2px] bg-center bg-no-repeat [&::-webkit-slider-thumb]:h-3 [&::-webkit-slider-thumb]:w-1.5 [&::-webkit-slider-thumb]:appearance-none [&::-webkit-slider-thumb]:bg-white"
        />
        <IconButton label="放大"><Svg w={9} h={9}><path d="M1 4.500H8M4.500 1V8" stroke="#fff" /></Svg></IconButton>
        <div className="flex items-center gap-2 pr-1 pl-2">
          <span>85%</span>
          <Caret color="#7f95ad" />
        </div>
        <IconButton label="适合页面"><Svg w={12} h={12}><path d="M3.500 3.500H10.500V11.500H3.500Z" stroke="#fff" /><path d="M0 1H12M1 0V12" stroke="#fff" strokeDasharray="1 1" /></Svg></IconButton>
        <IconButton label="适合宽度"><Svg w={12} h={12}><path d="M.5 1.500H11.500V10.500H.5ZM3 4H9V8H3ZM1 6H11" stroke="#fff" /></Svg></IconButton>
        <IconButton label="区域缩放"><Svg w={13} h={12}><path d="M.5 .5H10.500V10.500H.5Z" stroke="#fff" strokeDasharray="1 1" /><circle cx="6" cy="5" r="3" stroke="#fff" strokeWidth="1.500" /><path d="M8 7L12 11" stroke="#fff" strokeWidth="2" /></Svg></IconButton>
        <IconButton label="网格"><Svg w={12} h={12}><path d="M0 1.500H12M0 4.500H12M0 7.500H12M0 10.500H12M1.500 0V12M4.500 0V12M7.500 0V12M10.500 0V12" stroke="#fff" /></Svg></IconButton>
        <span className="self-end pl-[5px]">
          <Svg w={10} h={10}><path d="M8 0H10V2H8ZM4 4H6V6H4ZM8 4H10V6H8ZM0 8H2V10H0ZM4 8H6V10H4ZM8 8H10V10H8Z" fill="#dfe7ef" /></Svg>
        </span>
      </div>
    </footer>
  )
}

function Watermark() {
  return (
    <div className="pointer-events-none absolute right-[21px] bottom-5 flex items-center gap-1 text-[#999] opacity-80">
      <Svg w={44} h={46}>
        <path
          fillRule="evenodd"
          d="M24 1C36 1 43 10 43 22C43 36 34 45 22 45C12 45 4 40 1 27C4 31 6 33 8 33C5 28 4 24 4 20C5 9 13 1 24 1ZM24 3C17 3 14 10 14 18C14 27 18 33 24 33C31 33 34 26 34 18C34 10 31 3 24 3Z"
          fill="#999"
        />
      </Svg>
      <div className="flex flex-col">
        <span className="text-[23px] leading-[26px]">当下软件园</span>
        <span className="font-['Liberation_Sans',sans-serif] text-sm leading-[15px]">www.downxia.com</span>
      </div>
    </div>
  )
}

export default function App() {
  return (
    <div className="relative flex h-screen min-h-[600px] flex-col overflow-hidden border-r-2 border-[#2f5b82] bg-white font-['Noto_Sans','Noto_Sans_CJK_SC',sans-serif] text-[11px] text-[#1e1e1e]">
      <TitleBar />
      <MenuBar />
      <Ribbon />
      <div className="flex min-h-0 flex-1">
        <SymbolPanel />
        <Workspace />
        <SideTools />
      </div>
      <StatusBar />
      <Watermark />
    </div>
  )
}
